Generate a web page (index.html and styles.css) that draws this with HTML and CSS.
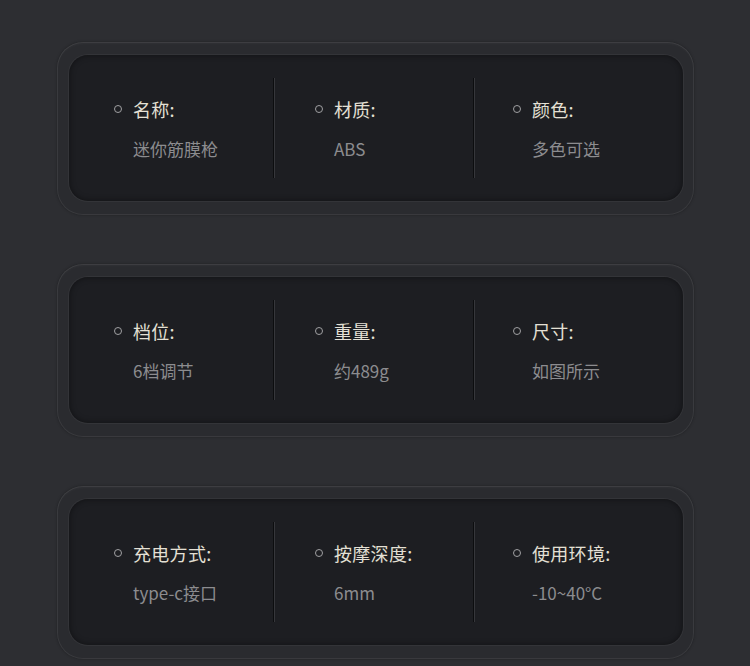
FILE: index.html
```html
<!DOCTYPE html>
<html lang="zh">
<head>
<meta charset="utf-8">
<link rel="stylesheet" href="styles.css">
</head>
<body>
<div class="page">
  <section class="card">
    <div class="panel">
      <div class="col first"><div class="title"><span class="dot"></span>名称:</div><div class="value">迷你筋膜枪</div></div>
      <div class="divider"></div>
      <div class="col"><div class="title"><span class="dot"></span>材质:</div><div class="value">ABS</div></div>
      <div class="divider"></div>
      <div class="col last"><div class="title"><span class="dot"></span>颜色:</div><div class="value">多色可选</div></div>
    </div>
  </section>
  <section class="card">
    <div class="panel">
      <div class="col first"><div class="title"><span class="dot"></span>档位:</div><div class="value">6档调节</div></div>
      <div class="divider"></div>
      <div class="col"><div class="title"><span class="dot"></span>重量:</div><div class="value">约489g</div></div>
      <div class="divider"></div>
      <div class="col last"><div class="title"><span class="dot"></span>尺寸:</div><div class="value">如图所示</div></div>
    </div>
  </section>
  <section class="card">
    <div class="panel">
      <div class="col first"><div class="title"><span class="dot"></span>充电方式:</div><div class="value">type-c接口</div></div>
      <div class="divider"></div>
      <div class="col"><div class="title"><span class="dot"></span>按摩深度:</div><div class="value">6mm</div></div>
      <div class="divider"></div>
      <div class="col last"><div class="title"><span class="dot"></span>使用环境:</div><div class="value">-10~40°C</div></div>
    </div>
  </section>
</div>
</body>
</html>
```
FILE: styles.css
```css
html, body {
  margin: 0;
  padding: 0;
  background: #2d2e32;
  width: 750px;
  height: 666px;
  overflow: hidden;
  font-family: "Noto Sans CJK SC", "Noto Sans", sans-serif;
}
.page {
  padding: 42px 0 0 57px;
  display: flex;
  flex-direction: column;
  gap: 49px;
}
.card {
  width: 637px;
  height: 173px;
  box-sizing: border-box;
  padding: 13px 11px 14px 12px;
  border-radius: 26px;
  background: #2a2b2f;
  box-shadow: inset 0 0 0 1px rgba(255,255,255,0.07), inset 0 2px 3px rgba(255,255,255,0.03), 0 0 3px rgba(0,0,0,0.3);
}
.panel {
  height: 100%;
  box-sizing: border-box;
  border-radius: 19px;
  background: #1d1e22;
  box-shadow: 0 0 0 1px #333438, inset 0 0 6px rgba(0,0,0,0.45);
  display: flex;
  align-items: center;
}
.col {
  width: 198px;
  height: 100%;
  box-sizing: border-box;
  padding: 40px 0 0 40px;
}
.col.first { width: 204px; padding-left: 45px; }
.col.last { padding-left: 38px; }
.divider {
  width: 1px;
  height: 100px;
  background: #0c0d0f;
  border-right: 1px solid #36373b;
  box-shadow: 0 0 14px rgba(255,255,255,0.03);
}
.title {
  display: flex;
  align-items: center;
  height: 28px;
  font-size: 18px;
  font-weight: 400;
  color: #e4e0d5;
  letter-spacing: 0.3px;
}
.dot {
  width: 8px;
  height: 8px;
  box-sizing: border-box;
  border: 1.7px solid #a0a0a2;
  border-radius: 50%;
  margin-right: 11px;
  flex: none;
}
.value {
  margin-top: 14px;
  padding-left: 19px;
  height: 24px;
  line-height: 24px;
  font-size: 17px;
  color: #8c8c8f;
}
```
